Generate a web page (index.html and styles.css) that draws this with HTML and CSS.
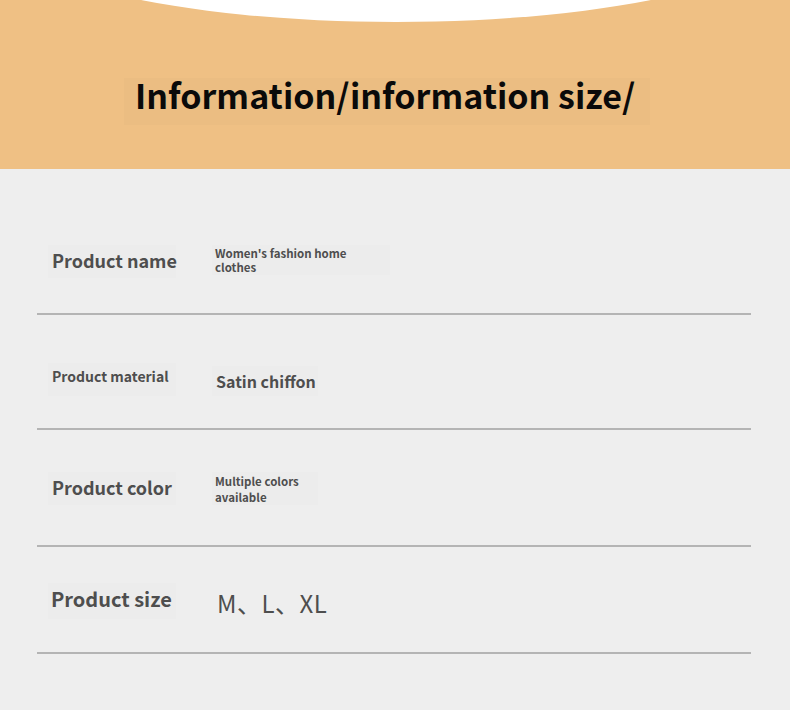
FILE: index.html
```html
<!DOCTYPE html>
<html lang="en">
<head>
<meta charset="utf-8">
<title>Information size</title>
<link rel="stylesheet" href="styles.css">
</head>
<body>
<header class="banner">
  <div class="arc"></div>
  <div class="title-box"><h1 class="title">Information/information size/</h1></div>
</header>
<main class="specs">
  <div class="row row-1">
    <div class="label label-18">Product name</div>
    <div class="value value-small val-1">Women's fashion home<br>clothes</div>
  </div>
  <div class="row row-2">
    <div class="label label-14">Product material</div>
    <div class="value value-16">Satin chiffon</div>
  </div>
  <div class="row row-3">
    <div class="label label-18">Product color</div>
    <div class="value value-small val-3">Multiple colors<br>available</div>
  </div>
  <div class="row row-4">
    <div class="label label-20">Product size</div>
    <div class="value value-22">M、L、XL</div>
  </div>
</main>
</body>
</html>
```
FILE: styles.css
```css
html, body {
  margin: 0;
  padding: 0;
}
body {
  width: 790px;
  height: 710px;
  overflow: hidden;
  background: #eeeeee;
  font-family: "Noto Sans CJK SC", "Noto Sans", sans-serif;
}
.banner {
  position: relative;
  height: 169px;
  background: #efc084;
  overflow: hidden;
  padding-top: 78px;
  box-sizing: border-box;
}
.arc {
  position: absolute;
  left: -4px;
  top: -170px;
  width: 800px;
  height: 192px;
  border-radius: 50%;
  background: #ffffff;
}
.title-box {
  margin-left: 124px;
  width: 526px;
  height: 47px;
  background: #ebbd82;
  box-sizing: border-box;
  padding-left: 11px;
  padding-bottom: 13px;
  display: flex;
  align-items: center;
}
.title {
  margin: 0;
  font-size: 34px;
  font-weight: 700;
  color: #0a0a0a;
  line-height: 1;
  white-space: nowrap;
}
.specs {
  margin: 0 39px 0 37px;
}
.row {
  display: flex;
  align-items: flex-start;
  border-bottom: 2px solid #b4b4b4;
  box-sizing: border-box;
}
.row-1 { height: 146px; padding-top: 76px; }
.row-2 { height: 115px; padding-top: 48px; }
.row-3 { height: 117px; padding-top: 42px; }
.row-4 { height: 107px; padding-top: 36px; }
.label {
  margin-left: 11px;
  width: 128px;
  height: 33px;
  box-sizing: border-box;
  padding-left: 4px;
  display: flex;
  align-items: center;
  background: #ececec;
  color: #4e4e4e;
  font-weight: 700;
  white-space: nowrap;
}
.label-18 { font-size: 18px; padding-bottom: 4px; }
.label-14 { font-size: 14px; align-items: flex-start; padding-top: 3px; }
.label-20 { font-size: 20px; height: 36px; padding-left: 3px; padding-bottom: 5px; }
.value {
  margin-left: 36px;
  box-sizing: border-box;
  padding-left: 3px;
  color: #4e4e4e;
  background: #ececec;
  display: flex;
  align-items: center;
}
.value-small {
  font-size: 11.5px;
  font-weight: 700;
  line-height: 14px;
  height: 30px;
}
.val-1 { width: 178px; }
.val-3 { width: 106px; height: 33px; line-height: 16px; }
.value-16 {
  font-size: 16px;
  font-weight: 700;
  height: 30px;
  width: 106px;
  margin-top: 3px;
  padding-left: 4px;
}
.value-22 {
  font-size: 24px;
  font-weight: 400;
  letter-spacing: 0.5px;
  height: 36px;
  padding-left: 5px;
  padding-bottom: 2px;
  margin-top: 2px;
  background: transparent;
}
```
